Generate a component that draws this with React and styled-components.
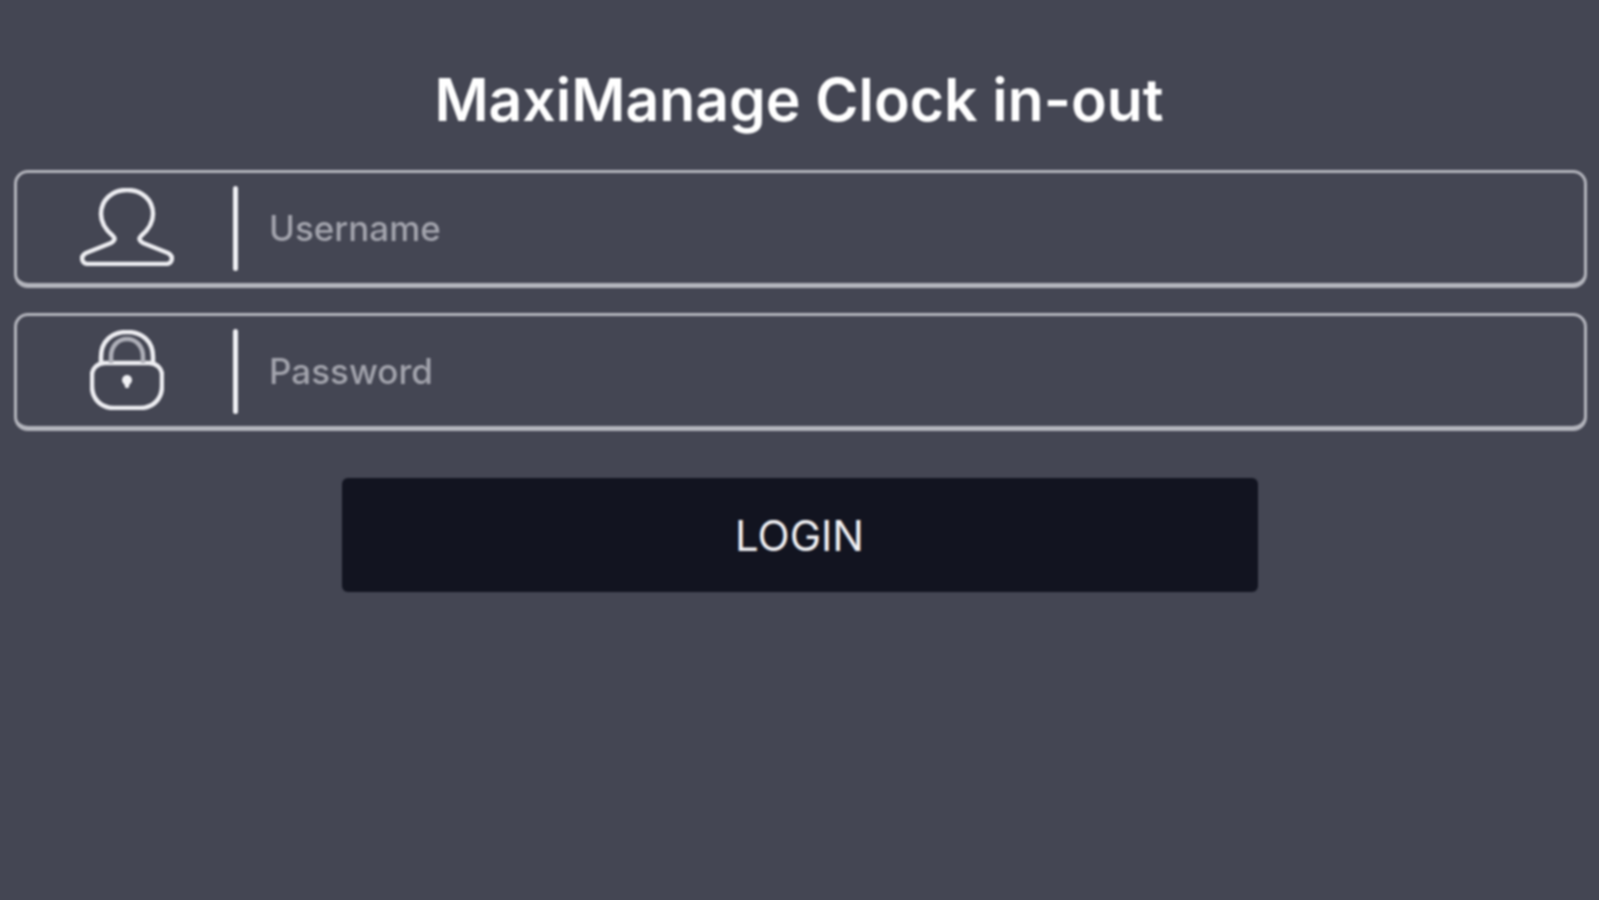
import React from 'react';
import styled, { createGlobalStyle } from 'styled-components';

const UserIcon = () => (
  <svg width="94" height="78" viewBox="0 0 94 78" fill="none" stroke="#eeeef2" strokeWidth="4.5" strokeLinejoin="round">
    <path d="M47 2C32 2 21 12 21 26C21 36 27 43 33 48C36 51 34 53 31 55L6 65C0 68 1 76 9 76H85C93 76 94 68 88 65L63 55C60 53 58 51 61 48C67 43 73 36 73 26C73 12 62 2 47 2Z" />
  </svg>
);

const LockIcon = () => (
  <svg width="74" height="80" viewBox="0 0 74 80" fill="none" stroke="#eeeef2" strokeWidth="4.5">
    <path d="M15 33H59C66 33 72 38 72 45V56C72 69 63 78 50 78H24C11 78 2 69 2 56V45C2 38 8 33 15 33Z" />
    <path d="M11 33V27C11 11 22 2 37 2C52 2 63 11 63 27V33" />
    <path d="M21 33V27C21 16 28 9 37 9C46 9 53 16 53 27V33" stroke="#aeafb8" />
    <circle cx="37" cy="50" r="5" fill="#f2f2f5" stroke="none" />
    <path d="M33.5 52H40.5L38.5 58H35.5Z" fill="#f2f2f5" stroke="none" />
  </svg>
);

export default function App() {
  return (
    <>
      <GlobalStyle />
      <Page>
        <Title>MaxiManage Clock in-out</Title>
        <Form onSubmit={(e) => e.preventDefault()}>
          <Field>
            <IconSlot>
              <UserIcon />
            </IconSlot>
            <Divider />
            <Input type="text" placeholder="Username" />
          </Field>
          <Field>
            <IconSlot>
              <LockIcon />
            </IconSlot>
            <Divider />
            <Input type="password" placeholder="Password" />
          </Field>
          <LoginButton>LOGIN</LoginButton>
        </Form>
      </Page>
    </>
  );
}

const GlobalStyle = createGlobalStyle`
  *, *::before, *::after {
    margin: 0;
    padding: 0;
    box-sizing: border-box;
  }

  body {
    font-family: "Inter", "Liberation Sans", sans-serif;
    background-color: #444653;
  }
`;

const Page = styled.div`
  display: flex;
  flex-direction: column;
  height: 100vh;
  padding: 65px 12px 0 14px;
  overflow: hidden;
  filter: blur(1px);
`;

const Title = styled.h1`
  text-align: center;
  font-size: 58.8px;
  line-height: 70px;
  font-weight: 600;
  color: #ffffff;
  margin-left: -3px;
`;

const Form = styled.form`
  display: flex;
  flex-direction: column;
  margin-top: 35px;
`;

const Field = styled.div`
  display: flex;
  align-items: center;
  height: 118px;
  margin-bottom: 25px;
  border: 3px solid #b4b5bd;
  border-bottom-width: 5px;
  border-radius: 14px;
`;

const IconSlot = styled.div`
  display: flex;
  justify-content: center;
  align-items: center;
  width: 216px;
  padding: 0 0 2px 4px;
  flex-shrink: 0;
  svg {
    display: block;
  }
`;

const Divider = styled.div`
  width: 5px;
  height: 85px;
  flex-shrink: 0;
  border-radius: 3px;
  background-color: #f0f0f4;
`;

const Input = styled.input`
  flex: 1;
  min-width: 0;
  margin-left: 31px;
  background: none;
  outline: none;
  border: none;
  font-family: inherit;
  font-size: 35px;
  font-weight: 500;
  color: #ffffff;

  &::placeholder {
    color: #a3a4ad;
    opacity: 1;
  }
`;

const LoginButton = styled.button`
  align-self: center;
  width: 916px;
  height: 114px;
  margin-top: 22px;
  margin-left: -2px;
  border: none;
  border-radius: 6px;
  background-color: #121420;
  color: #f2f2f5;
  font-family: inherit;
  font-size: 42px;
  font-weight: 400;
`;
